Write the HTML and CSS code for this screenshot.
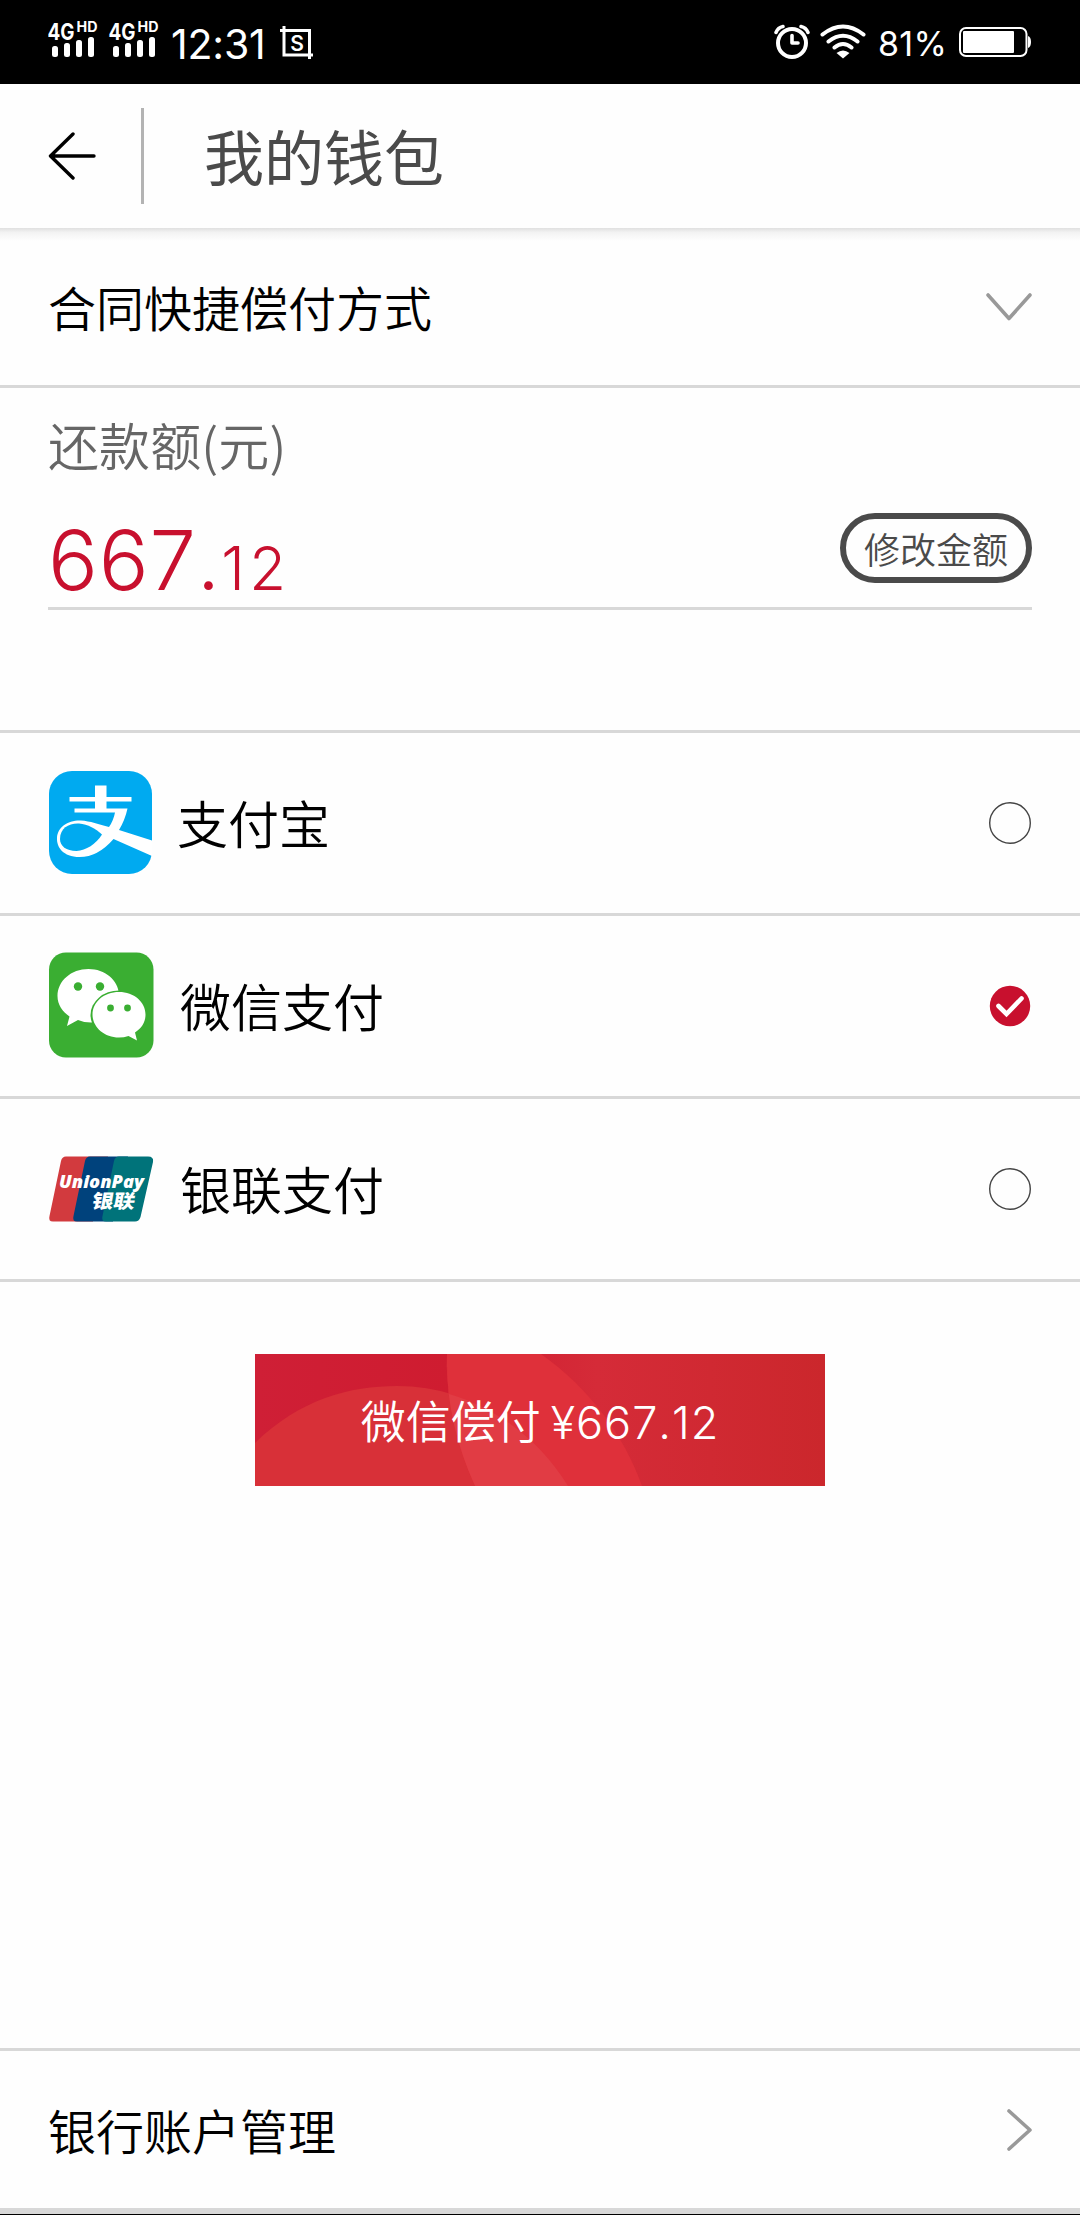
FILE: index.html
```html
<!DOCTYPE html>
<html lang="zh-CN">
<head>
<meta charset="utf-8">
<title>我的钱包</title>
<link rel="stylesheet" href="styles.css">
</head>
<body>
<div class="screen">
  <div class="status">
    <div class="status-left">
      <svg class="signals" width="112" height="60" viewBox="0 0 112 60" fill="#fff">
        <g id="sim">
          <text class="net" x="-0.500" y="39.500" textLength="27" lengthAdjust="spacingAndGlyphs">4G</text>
          <text class="hd" x="28.500" y="32" textLength="21" lengthAdjust="spacingAndGlyphs">HD</text>
          <rect x="4" y="46" width="6" height="11" rx="2.500"/>
          <rect x="16" y="43" width="6" height="14" rx="2.500"/>
          <rect x="28" y="40" width="6" height="17" rx="2.500"/>
          <rect x="40" y="37" width="6" height="20" rx="2.500"/>
        </g>
        <use href="#sim" x="61"/>
      </svg>
      <span class="clock">12:31</span>
      <svg class="shot" width="34" height="34" viewBox="0 0 34 34" fill="none" stroke="#fff">
        <path d="M0 4.500H29.500V33" stroke-width="3"/><path d="M4 0V29H33" stroke-width="3"/>
        <text class="shot-s" x="17" y="24.500" text-anchor="middle" fill="#fff">S</text>
      </svg>
    </div>
    <div class="status-right">
      <svg width="36" height="36" viewBox="0 0 36 36" fill="none" stroke="#fff" stroke-linecap="round">
        <circle cx="18" cy="19" r="14" stroke-width="4"/>
        <path d="M18 11.500V19H24" stroke-width="3.600" stroke-linejoin="round"/>
        <path d="M2 8.500Q4 3.500 9 2.500M34 8.500Q32 3.500 27 2.500" stroke-width="3.500"/>
      </svg>
      <svg class="wifi" width="46" height="36" viewBox="0 0 46 36" fill="none" stroke="#fff" stroke-width="4" stroke-linecap="round">
        <path d="M2.500 10.500Q23 -5.500 43.500 10.500M8.500 17.500Q23 6 37.500 17.500M14.500 23.500Q23 16.500 31.500 23.500"/>
        <path d="M16.500 29Q23 24 29.500 29L23 34.500Z" fill="#fff" stroke="none"/>
      </svg>
      <span class="percent">81%</span>
      <svg class="battery" width="73" height="32" viewBox="0 0 73 32">
        <rect x="1" y="2" width="66.500" height="28" rx="6" fill="none" stroke="#fff" stroke-width="2"/>
        <rect x="4" y="5" width="51" height="22" rx="1" fill="#fff"/>
        <path d="M69 10Q72 11 72 16T69 22Z" fill="#fff"/>
      </svg>
    </div>
  </div>

  <header class="header">
    <svg class="back" width="48" height="48" viewBox="0 0 48 48" fill="none" stroke="#000" stroke-width="3.400" stroke-linecap="round" stroke-linejoin="round">
      <path d="M46 24H3M25 2L2.500 24L25 46"/>
    </svg>
    <i class="divider"></i>
    <h1 class="title">我的钱包</h1>
  </header>

  <main class="content">
    <div class="row method">
      <span class="row-label">合同快捷偿付方式</span>
      <svg width="48" height="30" viewBox="0 0 48 30" fill="none" stroke="#999" stroke-width="3.600" stroke-linecap="round" stroke-linejoin="round"><path d="M4 3L25 26.500L46 3"/></svg>
    </div>

    <section class="due">
      <div class="label">还款额(元)</div>
      <div class="amount-row">
        <div class="amount"><span class="whole">667</span><span class="point">.</span><span class="cents">12</span></div>
        <button class="edit">修改金额</button>
      </div>
    </section>

    <div class="option">
      <svg class="logo" width="106" height="106" viewBox="0 0 106 106">
        <rect x="1" y="1" width="103" height="103" rx="23" fill="#00aaf0"/>
        <g fill="#fff">
          <path d="M47 15.500H58.500V27H83.500V31.500H58.500V38.500H79.500Q77 50 71 60L104 70.500V86L65.500 69Q50 87 31.500 87C15 87 8.500 77 9 68C9.500 57 20 50 33 50.500C42 51 51 54.500 61 57Q65.500 50.500 67 42.500H26.500V38.500H47V31.500H21.500V27H47Z"/>
        </g>
        <path d="M12 69C12 58 21 53 31 53.500C40 54 48 59 54 64.500C48 74 38 80.500 28.500 81C18 81 12 76 12 69Z" fill="#00aaf0"/>
      </svg>
      <span class="name alipay-name">支付宝</span>
      <svg class="radio" width="44" height="44" viewBox="0 0 44 44"><circle cx="22" cy="22" r="20.300" fill="none" stroke="#444" stroke-width="1.400"/></svg>
    </div>

    <div class="option">
      <svg class="logo wechat" width="106" height="106" viewBox="0 0 106 106">
        <rect x="1" y="0.500" width="104.500" height="105" rx="17" fill="#3aae32"/>
        <path d="M40.500 17C23 17 9.500 29 9.500 44C9.500 53 14.500 59.500 21.500 64.500L19 74L30 68Q36 70.500 43 70.500L55 69L71 42C70 28 57 17 40.500 17Z" fill="#fff"/>
        <ellipse cx="71" cy="63" rx="28.500" ry="24.500" fill="#3aae32"/>
        <path d="M71 40C56 40 44.500 50 44.500 62.500S56 85.500 71 85.500Q76 85.500 80.500 84L89 88.500L87 80.500C94 76 97.500 70 97.500 62.500C97.500 50 86 40 71 40Z" fill="#fff"/>
        <g fill="#3aae32"><circle cx="30" cy="34.500" r="4.200"/><circle cx="52" cy="34.500" r="4.200"/><circle cx="62.500" cy="56" r="3.400"/><circle cx="79.500" cy="56" r="3.400"/></g>
      </svg>
      <span class="name">微信支付</span>
      <svg class="radio" width="44" height="44" viewBox="0 0 44 44"><circle cx="22" cy="22" r="20.200" fill="#c8102e"/><path d="M10.500 22L18.500 30L33.500 14.500" fill="none" stroke="#fff" stroke-width="4.600" stroke-linecap="round"/></svg>
    </div>

    <div class="option">
      <svg class="logo" width="106" height="66" viewBox="0 0 106 66">
        <path d="M18 .5H60L45 65.500H5Q0 65.500 1.500 60L13 5Q14 .5 18 .5Z" fill="#d23a3e"/>
        <path d="M42 .5H80L65 65.500H29Q24 65.500 25.500 60L37 5Q38 .5 42 .5Z" fill="#00427c"/>
        <path d="M71 .5H100Q106 .5 105 6L92.500 61Q91 65.500 87 65.500H58Q53 65.500 54.500 60L66 5Q67 .5 71 .5Z" fill="#00737a"/>
        <g fill="#fff">
          <text class="up-en" x="11" y="32" textLength="85" lengthAdjust="spacingAndGlyphs">UnionPay</text>
          <text class="up-cn" transform="translate(43 51.500) skewX(-10)" textLength="43" lengthAdjust="spacingAndGlyphs">银联</text>
        </g>
      </svg>
      <span class="name">银联支付</span>
      <svg class="radio" width="44" height="44" viewBox="0 0 44 44"><circle cx="22" cy="22" r="20.300" fill="none" stroke="#444" stroke-width="1.400"/></svg>
    </div>

    <button class="pay">
      <svg class="pay-bg" width="570" height="132" viewBox="0 0 570 132">
        <defs>
          <linearGradient id="base"><stop offset="0" stop-color="#cf1f36"/><stop offset=".34" stop-color="#cf1c30"/><stop offset=".6" stop-color="#d52b38"/><stop offset="1" stop-color="#cb272c"/></linearGradient>
        </defs>
        <rect width="570" height="132" fill="url(#base)"/>
        <path d="M0 89C45 45 95 32 142 32Q172 32 200 41Q204 90 220 132H0Z" fill="#d83038"/>
        <path d="M192 0H286C335 35 368 80 387 132H220Q190 65 192 0Z" fill="#df303a"/>
        <path d="M192 0Q191 22 194 40C240 53 285 86 313 132H220Q190 65 192 0Z" fill="#e13c44"/>
      </svg>
      <span class="pay-label">微信偿付 <span class="pay-sum">¥667.12</span></span>
    </button>
  </main>

  <div class="row bank">
    <span class="row-label">银行账户管理</span>
    <svg width="30" height="46" viewBox="0 0 30 46" fill="none" stroke="#999" stroke-width="3.600" stroke-linecap="round" stroke-linejoin="round"><path d="M7 4L28 23L7 42"/></svg>
  </div>
</div>
</body>
</html>
```
FILE: styles.css
```css
* { box-sizing: border-box; }
body {
  margin: 0;
  background: #fefefe;
  font-family: "Noto Sans CJK SC", sans-serif;
  font-weight: 350;
  color: #000;
}
svg { display: block; flex: none; }
button { font: inherit; padding: 0; border: 0; }

.screen {
  display: flex;
  flex-direction: column;
  width: 1080px;
  height: 2215px;
  border-bottom: 1px solid #000;
}

.status {
  display: flex;
  justify-content: space-between;
  height: 84px;
  padding: 0 48px;
  background: #000;
  color: #fff;
  font-family: Inter, sans-serif;
}
.status-left, .status-right { display: flex; align-items: center; }
.status-left { align-items: flex-start; }
.signals { margin-right: 11px; }
.net { font: 700 23px Inter, sans-serif; }
.hd { font: 700 14px Inter, sans-serif; }
.clock {
  width: 93px;
  margin-top: 15px;
  font-size: 41px;
  line-height: 58px;
  font-weight: 400;
  font-kerning: none;
  font-feature-settings: "calt" 0;
  letter-spacing: -.2px;
  white-space: nowrap;
}
.shot { margin: 26px 0 0 16px; }
.shot-s { font: 600 21px Inter, sans-serif; stroke: none; }
.wifi { margin-left: 10px; }
.percent { margin: 3px 0 0 12px; width: 70px; font-size: 34px; font-weight: 400; letter-spacing: .3px; white-space: nowrap; }
.battery { margin-left: 11px; }

.header {
  position: relative;
  display: flex;
  align-items: center;
  height: 144px;
  padding-left: 48px;
}
.header::after {
  content: "";
  position: absolute;
  top: 100%;
  left: 0;
  right: 0;
  height: 13px;
  background: linear-gradient(#e0e0e0, #f3f3f3 35%, #fefefe);
}
.divider { width: 3px; height: 96px; margin-left: 45px; background: #b3b3b3; }
.title { margin: 0 0 3px 60px; font-size: 60px; line-height: 80px; font-weight: 400; color: #4a4a4a; }

.content { flex: 1; }
.row {
  display: flex;
  align-items: center;
  justify-content: space-between;
  padding: 0 48px;
  font-size: 48px;
  line-height: 70px;
}
.row-label { margin-bottom: 2px; }
.method { height: 160px; border-bottom: 3px solid #d8d8d8; }

.due { height: 345px; padding: 21px 48px 0; border-bottom: 3px solid #d8d8d8; }
.label { font-size: 51px; line-height: 70px; letter-spacing: .1px; color: #666; }
.amount-row {
  display: flex;
  justify-content: space-between;
  height: 131px;
  padding-top: 34px;
  border-bottom: 3px solid #d8d8d8;
}
.amount {
  color: #c8102e;
  font-family: Inter, sans-serif;
  font-kerning: none;
  line-height: 94px;
  white-space: nowrap;
}
.whole, .point { font-size: 83px; }
.whole { letter-spacing: .8px; }
.cents { margin-left: 1px; font-size: 60px; letter-spacing: 4.5px; }
.edit {
  width: 192px;
  height: 70px;
  border: 6px solid #4a4a4a;
  border-radius: 35px;
  background: none;
  color: #4a4a4a;
  font-size: 36px;
  line-height: 54px;
}

.option {
  display: flex;
  align-items: center;
  height: 183px;
  padding: 0 48px;
  border-bottom: 3px solid #d8d8d8;
}
.wechat { margin-bottom: 2px; }
.name { margin: 0 auto 3px 26px; font-size: 51px; line-height: 70px; }
.alipay-name { margin-left: 23px; }

.pay {
  display: grid;
  place-items: center;
  width: 570px;
  height: 132px;
  margin: 72px auto 0;
  color: #fff;
}
.pay-bg, .pay-label { grid-area: 1 / 1; }
.pay-label { margin-top: 2px; font-size: 45px; line-height: 60px; white-space: nowrap; }
.pay-sum { font-family: Inter, sans-serif; font-kerning: none; letter-spacing: 1px; }

.up-en { font: italic 800 18px "Open Sans", sans-serif; }
.up-cn { font: 900 19px "Noto Sans CJK SC", sans-serif; }

.bank { height: 166px; border-top: 3px solid #d8d8d8; border-bottom: 6px solid #d8d8d8; }
```
